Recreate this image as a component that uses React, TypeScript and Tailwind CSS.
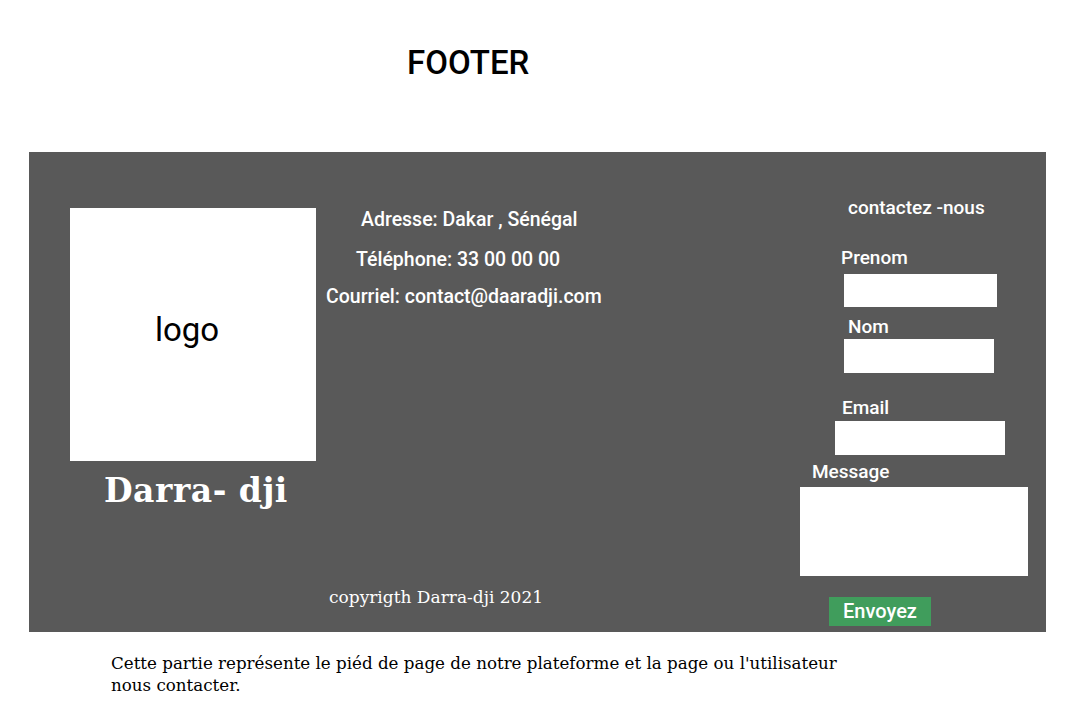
import React from "react";

const sans = "font-['Roboto',sans-serif]";
const serif = "font-['DejaVu_Serif',serif]";

export default function App() {
  return (
    <div className="w-[1080px] h-[712px] bg-white overflow-hidden">
      <h1 className={`${sans} pt-[44px] pl-[407px] text-[33px] leading-[38px] font-medium text-black`}>
        FOOTER
      </h1>

      <footer className="mt-[70px] ml-[29px] w-[1017px] h-[480px] bg-[#595959] flex text-white">
        {/* logo + nom */}
        <div className="w-[297px] shrink-0 pl-[41px] pt-[56px] flex flex-col">
          <div className="w-[246px] h-[253px] bg-white flex items-center justify-center pr-[12px] pb-[10px]">
            <span className={`${sans} text-[33px] text-black`}>logo</span>
          </div>
          <div className={`${serif} mt-[12px] pl-[34px] text-[33px] leading-[36px] font-bold tracking-[0.5px]`}>
            Darra- dji
          </div>
        </div>

        {/* coordonnees */}
        <div className={`${sans} w-[474px] shrink-0 flex flex-col text-[19.5px] leading-[20px] font-medium`}>
          <p className="mt-[58px] ml-[35px]">Adresse: Dakar , Sénégal</p>
          <p className="mt-[20px] ml-[30px]">Téléphone: 33 00 00 00</p>
          <p className="mt-[17px] ml-0">Courriel: contact@daaradji.com</p>
          <p className={`${serif} mt-auto mb-[26px] ml-[3px] text-[17px] leading-[18px] font-normal`}>
            copyrigth Darra-dji 2021
          </p>
        </div>

        {/* formulaire */}
        <form className={`${sans} flex flex-col items-start pt-[46px] text-[19px] leading-[20px] font-medium`}>
          <span className="ml-[48px]">contactez -nous</span>
          <label className="mt-[30px] ml-[41px]">Prenom</label>
          <input className="mt-[6px] ml-[44px] w-[153px] h-[33px] bg-white outline-none" />
          <label className="mt-[10px] ml-[48px]">Nom</label>
          <input className="mt-[2px] ml-[44px] w-[150px] h-[34px] bg-white outline-none" />
          <label className="mt-[25px] ml-[42px]">Email</label>
          <input className="mt-[3px] ml-[35px] w-[170px] h-[34px] bg-white outline-none" />
          <label className="mt-[7px] ml-[12px]">Message</label>
          <textarea className="mt-[5px] w-[228px] h-[89px] bg-white outline-none resize-none" />
          <button
            type="button"
            className="mt-[21px] ml-[29px] w-[102px] h-[29px] bg-[#409d5c] text-white text-[20px] leading-[29px]"
          >
            Envoyez
          </button>
        </form>
      </footer>

      <div className={`${serif} mt-[20px] pl-[111px] text-[16.7px] leading-[22px] text-black`}>
        <p className="w-[727px] whitespace-nowrap overflow-hidden">
          Cette partie représente le piéd de page de notre plateforme et la page ou l'utilisateur
        </p>
        <p>nous contacter.</p>
      </div>
    </div>
  );
}
